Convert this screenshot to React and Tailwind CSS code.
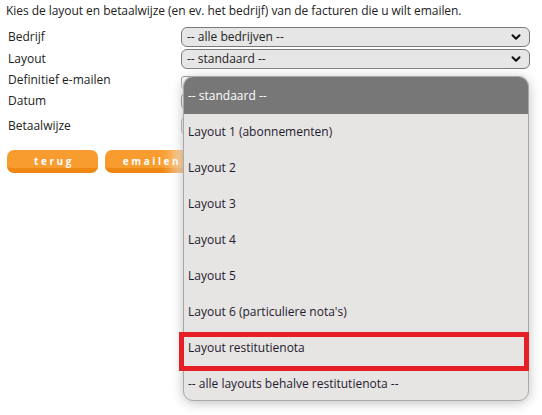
import React from "react";
import { ChevronDown } from "lucide-react";

const layouts = [
  "Layout 1 (abonnementen)",
  "Layout 2",
  "Layout 3",
  "Layout 4",
  "Layout 5",
  "Layout 6 (particuliere nota's)",
  "Layout restitutienota",
  "-- alle layouts behalve restitutienota --",
];

// Fake select box
const Select = ({ value }) => (
  <div className="w-[349px] h-[20px] flex items-center justify-between rounded-[6px] border border-[#7a7a7a] bg-[#e6e6e6] pl-[5px] pr-[6px]">
    <span className="leading-none">{value}</span>
    <ChevronDown size={14} strokeWidth={3.5} className="text-[#111]" />
  </div>
);

const OrangeButton = ({ children }) => (
  <button className="w-[91px] h-[23px] rounded-[7px] bg-[#f89c2f] border-b-[5px] border-[#ee8711] text-white text-[10px] font-bold tracking-[2.6px] leading-none pt-[4px] pl-[3px]">
    {children}
  </button>
);

export default function App() {
  return (
    <div className="relative w-[542px] h-[415px] bg-white text-[12px] text-[#222] font-['Open_Sans',sans-serif] overflow-hidden">
      <p className="pl-[6px] pt-[2px] leading-[18px] tracking-[-0.05px]">
        Kies de layout en betaalwijze (en ev. het bedrijf) van de facturen die u wilt emailen.
      </p>

      <div className="pl-[8px] mt-[7px] flex flex-col">
        <div className="flex items-center h-[20px]">
          <span className="w-[173px]">Bedrijf</span>
          <Select value="-- alle bedrijven --" />
        </div>
        <div className="flex items-center h-[20px] mt-[2px]">
          <span className="w-[173px]">Layout</span>
          <Select value="-- standaard --" />
        </div>
        <div className="flex items-center h-[20px] mt-[1px]">
          <span className="w-[173px]">Definitief e-mailen</span>
          <div className="w-[13px] h-[13px] mt-[5px] rounded-[3px] border border-[#777] bg-white" />
        </div>
        <div className="flex items-center h-[20px] mt-[1px]">
          <span className="w-[173px]">Datum</span>
          <div className="w-[120px] h-[18px] rounded-[6px] border border-[#333] bg-white" />
        </div>
        <div className="flex items-center h-[22px] mt-[4px]">
          <span className="w-[173px]">Betaalwijze</span>
          <div className="w-[200px] h-[20px] rounded-[6px] border border-[#7a7a7a] bg-[#e6e6e6]" />
        </div>
        <div className="flex gap-[7px] mt-[13px] -ml-[1px]">
          <OrangeButton>terug</OrangeButton>
          <OrangeButton>emailen</OrangeButton>
        </div>
      </div>

      {/* open dropdown list */}
      <div className="absolute left-[183px] top-[76px] w-[346px] h-[325px] rounded-[10px] border border-[#a9a9a9] bg-[#e6e5e3] overflow-hidden shadow-[0_2px_12px_rgba(0,0,0,0.25),-10px_0_14px_rgba(255,255,255,0.6)]">
        <div className="h-[37px] bg-[#777777] text-white flex items-center pl-[4px]">-- standaard --</div>
        {layouts.map((l) => (
          <div key={l} className="h-[36px] flex items-center pl-[4px] text-[#1f1a2e]">
            {l}
          </div>
        ))}
      </div>

      {/* red highlight */}
      <div className="absolute left-[179px] top-[332px] w-[350px] h-[39px] border-[5px] border-[#e61e25]" />
    </div>
  );
}
